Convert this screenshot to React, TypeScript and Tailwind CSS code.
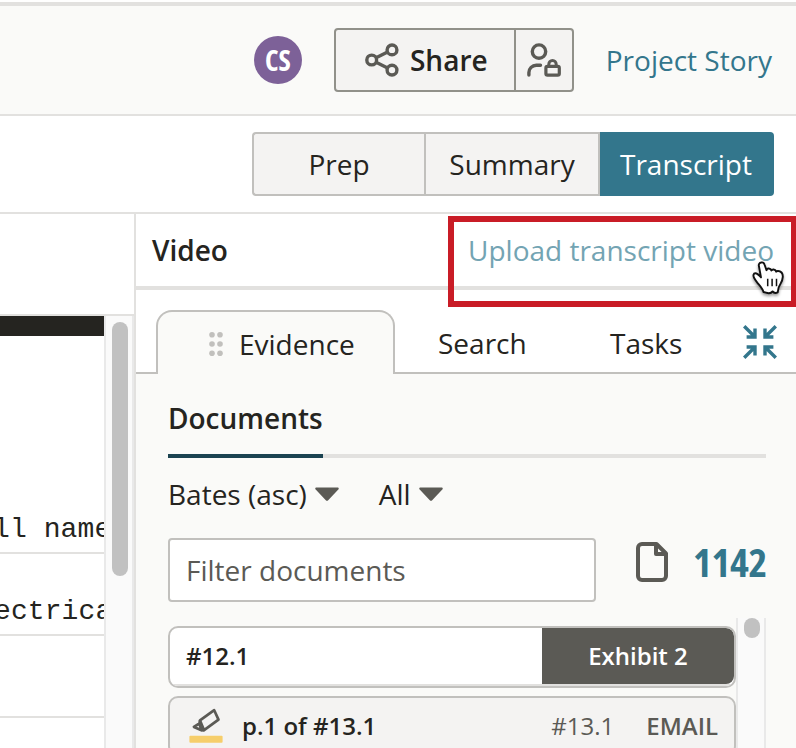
import type { ReactNode } from "react";
import clsx from "clsx";

const views = [
  { label: "Prep", className: "w-[172px] rounded-l-[4px] border-r-0" },
  { label: "Summary", className: "w-[176px]" },
];

const transcriptLines = ["", "", "ll name", "ectrica", "", ""];

function ShareIcon() {
  return (
    <svg width="34" height="34" viewBox="0 0 34 34" fill="none" stroke="#5b5a55" strokeWidth="3.4">
      <circle cx="6.7" cy="17" r="4.9" />
      <circle cx="27" cy="6.9" r="4.9" />
      <circle cx="27" cy="27.1" r="4.9" />
      <path d="M11.100 14.800 22.600 9M11.100 19.200 22.600 25" />
    </svg>
  );
}

function UserLockIcon() {
  return (
    <svg width="34" height="34" viewBox="0 0 34 34" fill="none" stroke="#5b5a55" strokeWidth="3.4" strokeLinecap="round">
      <circle cx="12" cy="8.6" r="6.7" />
      <path d="M1.900 32v-2.400a7.400 7.400 0 0 1 7.400-7.400h4.200" />
      <rect x="18.9" y="23.3" width="13.4" height="8.8" rx="1.6" strokeWidth="3.2" />
      <path d="M21.800 23v-1.800a3.700 3.700 0 0 1 7.400 0V23" strokeWidth="3" />
    </svg>
  );
}

function CollapseIcon() {
  return (
    <svg width="34" height="34" viewBox="0 0 34 34" fill="none" stroke="#33768c" strokeWidth="3.4">
      <path d="M1.2 1.2 11 11M3.6 12H12V3.6" />
      <path d="M32.8 1.2 23 11M30.4 12H22V3.6" />
      <path d="M1.2 32.8 11 23M3.6 22H12v8.4" />
      <path d="M32.8 32.8 23 23M30.4 22H22v8.4" />
    </svg>
  );
}

function GripIcon() {
  return (
    <svg width="14" height="24" viewBox="0 0 14 24" fill="#c1c0bd">
      {[2.8, 12, 21.2].map((y) => (
        <g key={y}>
          <circle cx="3" cy={y} r="2.8" />
          <circle cx="11" cy={y} r="2.8" />
        </g>
      ))}
    </svg>
  );
}

function CaretIcon() {
  return (
    <svg width="24" height="15" viewBox="0 0 24 15" fill="#5b5a55">
      <path d="M1.5.5h21c1.2 0 1.7 1.3.8 2.1L13.2 13.2c-.7.7-1.7.7-2.4 0L.7 2.6C-.2 1.8.3.5 1.5.5Z" />
    </svg>
  );
}

function FileIcon() {
  return (
    <svg width="32" height="40" viewBox="0 0 32 40" fill="none" stroke="#5b5a55" strokeWidth="4" strokeLinejoin="round">
      <path d="M6 2h14.5L30 11.5V34a4 4 0 0 1-4 4H6a4 4 0 0 1-4-4V6a4 4 0 0 1 4-4Z" />
      <path d="M20 2v10h10" />
    </svg>
  );
}

function HighlighterIcon() {
  return (
    <svg width="34" height="36" viewBox="0 0 34 36" fill="none">
      <g stroke="#5b5a55" strokeWidth="2.7" strokeLinejoin="round">
        <path d="M11 13.4 25.2 3.2l4.3 9.4-14.4 10.6Z" />
        <path d="m11 13.4-.6 3.1-5.5 3.4 7.6 3.4 2.6-.1M10.4 16.5l2.1 6.800" />
      </g>
      <rect x="0.4" y="28.7" width="33.2" height="7" rx="1" fill="#f6ce6b" />
    </svg>
  );
}

function PointerIcon() {
  return (
    <svg width="34" height="36" viewBox="0 0 34 36" className="drop-shadow-[0_2px_1.5px_rgba(0,0,0,0.4)]">
      <path
        d="M9.200 2.500c1.500-.4 2.900.5 3.400 2.200l1.900 5.500c.3-1.300 1.300-1.900 2.500-1.700 1.400.2 2.200 1 2.400 2.100.5-.9 1.300-1.300 2.400-1.100 1.300.2 2.100 1 2.400 2.200.5-.6 1.300-.9 2.300-.7 2.900.5 4.400 2.500 4.300 5.900-.1 4.800-3.200 7.500-4.300 11.200l-.8 4.300c-1.700.7-4 .6-5.100-1-1.400 1.900-3.900 2.200-6.600 1.300l-2.500-.7c-.9-3.400-3.600-6.100-5.700-8.700-1.400-1.800-2.500-3.400-3.500-5.100-1.600-2.800-.8-4.800 1-4.900 2-.1 3.900 2.100 5.700 4.100L6.900 6c-.5-1.700.6-3.100 2.300-3.500Z"
        fill="#fff"
        stroke="#111"
        strokeWidth="1.9"
        strokeLinejoin="round"
      />
      <path d="M15.700 18.800v7.400M20.100 18.800v7.400M24.500 18.800v7.400" stroke="#111" strokeWidth="1.500" />
    </svg>
  );
}

function TopBar() {
  return (
    <header className="flex h-[114px] items-center border-y-2 border-[#e2e1df] border-t-[4px] bg-[#fafaf8] pr-6 pl-[254px]">
      <div className="flex size-12 items-center justify-center rounded-full bg-[#7d6198] text-[28px] font-bold text-white [font-stretch:75%]">
        CS
      </div>
      <div className="ml-8 flex h-16 w-60 rounded-[4px] border-2 border-[#91918a] bg-[#f4f3f2]">
        <button className="flex w-[180px] items-center border-r-2 border-[#91918a] pl-[29px] text-[28px] font-semibold">
          <ShareIcon />
          <span className="ml-[11px]">Share</span>
        </button>
        <button className="flex flex-1 items-center justify-center">
          <UserLockIcon />
        </button>
      </div>
      <a className="ml-8 whitespace-nowrap text-[#33768c]">Project Story</a>
    </header>
  );
}

function ViewSwitch() {
  return (
    <div className="flex h-[98px] justify-end border-b-2 border-[#e2e1df] pt-4 pr-[22px]">
      <div className="flex h-16">
        {views.map((view) => (
          <button key={view.label} className={clsx("border-2 border-[#c1c0bd] bg-[#f4f3f2]", view.className)}>
            {view.label}
          </button>
        ))}
        <button className="w-[174px] rounded-r-[4px] bg-[#33768c] pr-0.5 text-white">Transcript</button>
      </div>
    </div>
  );
}

function TranscriptPane() {
  return (
    <section className="flex w-[136px] shrink-0 flex-col border-r-2 border-[#e2e1df]">
      <div className="h-[102px] shrink-0 border-b-2 border-[#e2e1df]" />
      <div className="flex min-h-0 flex-1">
        <div className="w-[104px] overflow-hidden">
          <div className="h-5 bg-[#252420]" />
          <div className="-mt-[28px] font-['Liberation_Mono',monospace]">
            {transcriptLines.map((line, index) => (
              <div
                key={index}
                className={clsx(
                  "flex h-[82px] items-end pb-[3px] whitespace-pre",
                  index > 1 && "border-b-2 border-[#e2e1df]",
                )}
              >
                <span className={clsx("tracking-[0.1px]", index === 2 ? "-ml-[7px]" : "-ml-[6px]")}>{line}</span>
              </div>
            ))}
          </div>
        </div>
        <div className="w-[30px] border-r-2 border-l-2 border-[#e9e9e9] bg-[#fafafa] px-1.5 pt-1.5">
          <div className="h-[254px] w-4 rounded-full bg-[#c1c1c1]" />
        </div>
      </div>
    </section>
  );
}

function TabBar() {
  return (
    <div className="flex h-[84px] items-end">
      <div className="h-full w-5 border-b-2 border-[#c1c0bd]" />
      <button className="flex h-16 w-[239px] items-center rounded-t-[16px] border-2 border-b-0 border-[#c1c0bd] bg-[#fafaf8] pt-0.5 pl-[51px]">
        <GripIcon />
        <span className="ml-4">Evidence</span>
      </button>
      <div className="flex h-full flex-1 items-end border-b-2 border-[#c1c0bd] pb-2.5 pl-[43px]">
        <button className="w-[172px] text-left">Search</button>
        <button className="w-[133px] text-left">Tasks</button>
        <button className="mb-[3px] flex">
          <CollapseIcon />
        </button>
      </div>
    </div>
  );
}

function Dropdown({ children }: { children: ReactNode }) {
  return (
    <button className="flex items-center gap-2">
      {children}
      <CaretIcon />
    </button>
  );
}

function DocumentList() {
  return (
    <div className="mt-4 flex min-h-0 flex-1">
      <div className="flex w-[568px] flex-col gap-2 pt-2 text-2xl">
        <div className="flex h-[62px] shrink-0 overflow-hidden rounded-[10px] border-2 border-[#c1c0bd] bg-white">
          <div className="flex flex-1 border-b-2 border-[#e2e1df]">
            <div className="flex flex-1 items-center pl-4 font-semibold">#12.1</div>
            <div className="flex w-48 items-center justify-center rounded-r-lg bg-[#5b5a55] font-semibold text-white">
              Exhibit 2
            </div>
          </div>
        </div>
        <div className="flex h-15 shrink-0 items-center rounded-[10px] border-2 border-[#c1c0bd] bg-[#f4f3f2] pr-4 pl-[19px]">
          <div className="-mt-0.5">
            <HighlighterIcon />
          </div>
          <span className="ml-[19px] font-semibold">p.1 of #13.1</span>
          <span className="ml-auto text-[#5b5a55]">#13.1</span>
          <span className="ml-8 font-semibold text-[#5b5a55]">EMAIL</span>
        </div>
      </div>
      <div className="w-[30px] border-x-2 border-[#e9e9e9] bg-[#fafafa] px-1.5">
        <div className="h-5 w-4 rounded-full bg-[#c1c1c1]" />
      </div>
    </div>
  );
}

function EvidencePanel() {
  return (
    <div className="flex min-h-0 flex-1 flex-col bg-[#fafaf8] pl-8">
      <div className="mr-[30px] flex h-[84px] border-b-4 border-[#e2e1df]">
        <h2 className="-mb-1 flex h-[84px] w-[155px] items-center border-b-4 border-[#1b4351] pt-2 font-semibold">
          Documents
        </h2>
      </div>
      <div className="mt-[17px] flex h-[38px] items-center gap-10">
        <Dropdown>Bates (asc)</Dropdown>
        <Dropdown>All</Dropdown>
      </div>
      <div className="mt-[25px] flex h-16">
        <input
          className="w-[428px] rounded-[4px] border-2 border-[#c1c0bd] bg-white px-4 placeholder:text-[#5b5a55] placeholder:opacity-100"
          placeholder="Filter documents"
        />
        <div className="mt-1 ml-10">
          <FileIcon />
        </div>
        <span className="ml-[25px] text-[40px] leading-[47px] font-bold tracking-[-0.3px] text-[#33768c] [font-stretch:75%]">
          1142
        </span>
      </div>
      <DocumentList />
    </div>
  );
}

export default function App() {
  return (
    <div className="relative flex h-[748px] w-[796px] flex-col overflow-hidden bg-white pt-0.5 font-['Open_Sans',sans-serif] text-[28px] leading-[38px] text-[#252420]">
      <TopBar />
      <ViewSwitch />
      <div className="flex min-h-0 flex-1">
        <TranscriptPane />
        <section className="flex min-w-0 flex-1 flex-col">
          <div className="flex h-[76px] shrink-0 items-center justify-between border-b-4 border-[#e2e1df] pr-[22px] pl-4">
            <h2 className="font-semibold">Video</h2>
            <a className="text-[#73a4b3]">Upload transcript video</a>
          </div>
          <TabBar />
          <EvidencePanel />
        </section>
      </div>
      <div className="absolute top-[216px] left-[448px] h-[91px] w-[349px] border-[6px] border-[#c91c26]" />
      <div className="absolute top-[260px] left-[752px]">
        <PointerIcon />
      </div>
    </div>
  );
}
